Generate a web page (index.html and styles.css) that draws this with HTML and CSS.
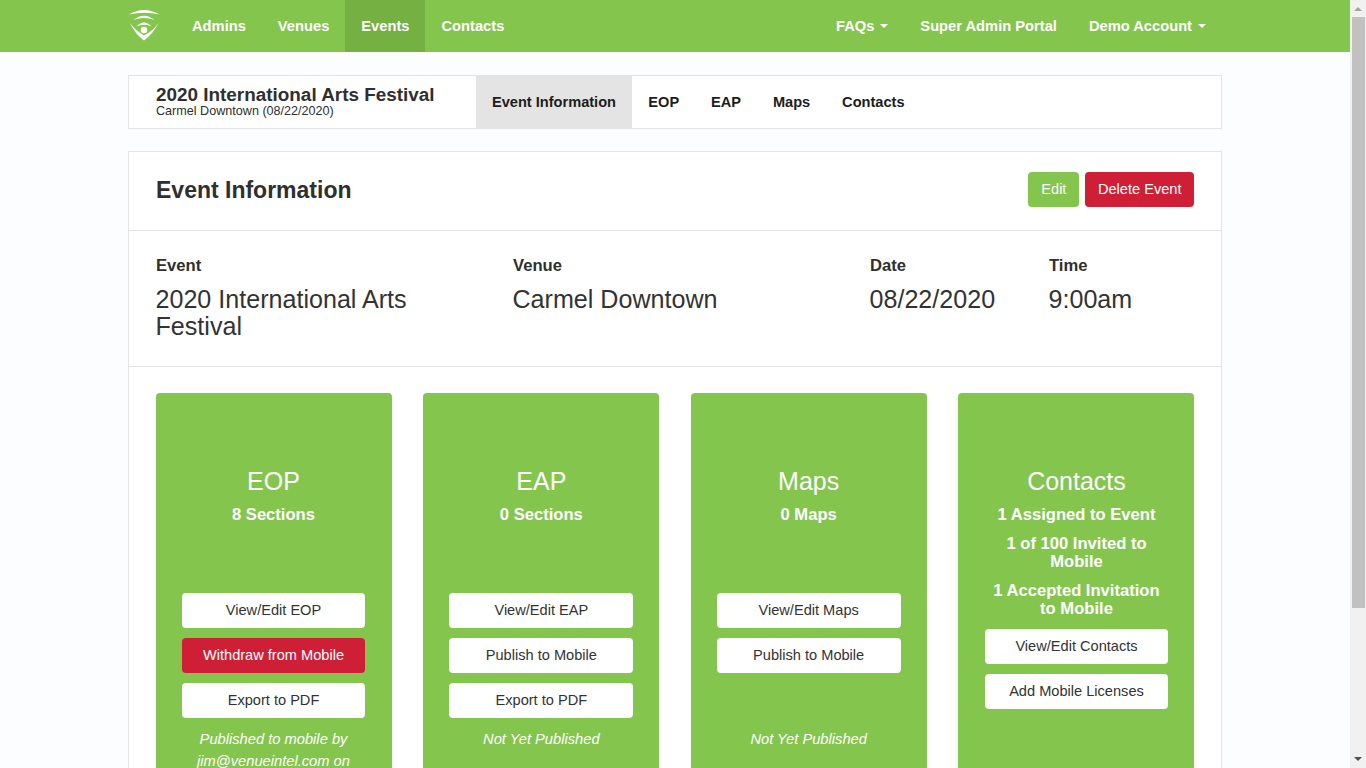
FILE: index.html
```html
<!DOCTYPE html>
<html lang="en">
<head>
<meta charset="utf-8">
<title>2020 International Arts Festival</title>
<link rel="stylesheet" href="styles.css">
</head>
<body>
<nav class="navbar">
  <div class="nav-inner">
    <a class="logo" href="#" aria-label="Venue Intel">
      <svg width="34" height="34" viewBox="0 0 34 34" fill="#fff">
        <path d="M1 5.500Q16 -3.500 31.500 5.500Q16 2 1 5.500Z"/>
        <path d="M5.500 11Q16 2.500 26.500 11Q16 7 5.500 11Z"/>
        <path d="M8.500 17.500Q16 9.500 23.500 17.500Q16 14 8.500 17.500Z"/>
        <path d="M2 14Q7 25 16 31.500Q25 25 30.500 14Q25 22 16 26.500Q8 22 2 14Z"/>
        <circle cx="16" cy="21" r="3.300"/>
      </svg>
    </a>
    <ul class="nav-list">
      <li><a href="#">Admins</a></li>
      <li><a href="#">Venues</a></li>
      <li class="active"><a href="#">Events</a></li>
      <li><a href="#">Contacts</a></li>
    </ul>
    <ul class="nav-list nav-right">
      <li><a href="#">FAQs <span class="caret"></span></a></li>
      <li><a href="#">Super Admin Portal</a></li>
      <li><a href="#">Demo Account <span class="caret"></span></a></li>
    </ul>
  </div>
</nav>
<main class="container">
  <section class="subnav">
    <div class="subnav-title">
      <div class="subnav-name">2020 International Arts Festival</div>
      <div class="subnav-venue">Carmel Downtown (08/22/2020)</div>
    </div>
    <ul class="subnav-list">
      <li class="active"><a href="#">Event Information</a></li>
      <li><a href="#">EOP</a></li>
      <li><a href="#">EAP</a></li>
      <li><a href="#">Maps</a></li>
      <li><a href="#">Contacts</a></li>
    </ul>
  </section>
  <section class="panel">
    <header class="panel-head">
      <h1>Event Information</h1>
      <div class="head-actions">
        <a class="btn btn-green" href="#">Edit</a>
        <a class="btn btn-red" href="#">Delete Event</a>
      </div>
    </header>
    <div class="info">
      <div class="info-col info-event"><h2>Event</h2><p>2020 International Arts Festival</p></div>
      <div class="info-col info-venue"><h2>Venue</h2><p>Carmel Downtown</p></div>
      <div class="info-col info-date"><h2>Date</h2><p>08/22/2020</p></div>
      <div class="info-col info-time"><h2>Time</h2><p>9:00am</p></div>
    </div>
    <div class="cards">
      <article class="card">
        <h3>EOP</h3>
        <div class="stats"><p>8 Sections</p></div>
        <div class="actions">
          <a class="btn btn-white" href="#">View/Edit EOP</a>
          <a class="btn btn-red" href="#">Withdraw from Mobile</a>
          <a class="btn btn-white" href="#">Export to PDF</a>
        </div>
        <p class="note">Published to mobile by jim@venueintel.com on 08/01/2020</p>
      </article>
      <article class="card card-mid">
        <h3>EAP</h3>
        <div class="stats"><p>0 Sections</p></div>
        <div class="actions">
          <a class="btn btn-white" href="#">View/Edit EAP</a>
          <a class="btn btn-white" href="#">Publish to Mobile</a>
          <a class="btn btn-white" href="#">Export to PDF</a>
        </div>
        <p class="note">Not Yet Published</p>
      </article>
      <article class="card card-mid">
        <h3>Maps</h3>
        <div class="stats"><p>0 Maps</p></div>
        <div class="actions">
          <a class="btn btn-white" href="#">View/Edit Maps</a>
          <a class="btn btn-white" href="#">Publish to Mobile</a>
          <span class="btn btn-blank"></span>
        </div>
        <p class="note">Not Yet Published</p>
      </article>
      <article class="card card-last">
        <h3>Contacts</h3>
        <div class="stats stats-contacts">
          <p>1 Assigned to Event</p>
          <p>1 of 100 Invited to Mobile</p>
          <p>1 Accepted Invitation to Mobile</p>
        </div>
        <div class="actions">
          <a class="btn btn-white" href="#">View/Edit Contacts</a>
          <a class="btn btn-white" href="#">Add Mobile Licenses</a>
        </div>
      </article>
    </div>
  </section>
</main>
<div class="scrollbar" aria-hidden="true">
  <span class="arrow arrow-up"></span>
  <span class="thumb"></span>
  <span class="arrow arrow-down"></span>
</div>
</body>
</html>
```
FILE: styles.css
```css
* { box-sizing: border-box; }
html { scrollbar-width: none; }
body {
  margin: 0;
  background: #fcfdff;
  color: #333;
  font-family: "Liberation Sans", Arial, sans-serif;
  font-size: 16px;
  line-height: 1.15;
}
a { text-decoration: none; color: inherit; }
ul { list-style: none; margin: 0; padding: 0; }
h1, h2, h3, p { margin: 0; }

.navbar { background: #84c54e; height: 52px; }
.nav-inner { width: 1094px; margin-left: 128px; display: flex; height: 52px; }
.logo { width: 48px; display: flex; align-items: center; }
.nav-list { display: flex; }
.nav-list a {
  display: flex; align-items: center; height: 52px; padding: 0 16px;
  color: #fff; font-weight: 700; font-size: 14.700px;
}
.nav-list .active a { background: #75b043; }
.nav-right { margin-left: auto; }
.caret {
  display: inline-block; width: 0; height: 0; margin-left: 6px;
  border-top: 4px solid #fff; border-left: 4px solid transparent; border-right: 4px solid transparent;
}

.container { width: 1094px; margin: 23px 0 0 128px; }

.subnav {
  display: flex; height: 54px; background: #fff; border: 1px solid #e4e4e4;
}
.subnav-title { width: 347px; padding: 8.500px 0 0 27px; color: #2f2f2f; }
.subnav-name { font-size: 18.900px; font-weight: 700; line-height: 20px; }
.subnav-venue { font-size: 12.600px; line-height: 13px; margin-top: 0.500px; }
.subnav-list { display: flex; }
.subnav-list a {
  display: flex; align-items: center; height: 52px; padding: 0 15.950px;
  font-size: 14.600px; font-weight: 700; color: #1d1d1d;
}
.subnav-list .active a { background: #e4e4e4; padding-right: 16.400px; }

.panel { background: #fff; border: 1px solid #e4e4e4; margin-top: 22px; }
.panel-head {
  display: flex; justify-content: space-between; align-items: center;
  height: 79px; padding: 0 27px; border-bottom: 1px solid #e4e4e4;
}
.panel-head h1 { font-size: 23px; font-weight: 700; color: #2f2f2f; margin-bottom: 2px; }
.head-actions { display: flex; gap: 6px; margin-bottom: 4px; }

.btn {
  display: flex; align-items: center; justify-content: center;
  height: 35px; padding: 0 12.500px; border-radius: 4px; font-size: 14.600px;
}
.btn-green { background: #84c54e; color: #fff; padding: 0 13px; }
.btn-red { background: #cf1f36; color: #fff; }
.btn-white { background: #fff; color: #333; }
.btn-blank { visibility: hidden; }

.info { display: flex; height: 136px; padding: 26px 27px 0; border-bottom: 1px solid #e4e4e4; }
.info-col h2 { font-size: 16.600px; font-weight: 700; color: #2f2f2f; line-height: 18px; margin-bottom: 11px; }
.info-col p { font-size: 25.100px; line-height: 27px; color: #333; margin-left: -0.500px; }
.info-event { width: 357px; padding-right: 60px; }
.info-venue { width: 357px; }
.info-date { width: 179px; }
.info-time { width: 145px; }

.cards { display: flex; justify-content: space-between; padding: 26px 27px 0; }
.card {
  width: 236px; background: #84c54e; color: #fff; border-radius: 4px 4px 0 0;
  height: 400px; padding: 74px 27px 0 26px; text-align: center;
}
.card-mid { padding-right: 26px; }
.card-last { padding-left: 27px; padding-right: 26px; }
.card h3 { font-size: 25px; font-weight: 400; line-height: 28px; }
.stats { height: 98px; padding-top: 11px; font-size: 16.600px; font-weight: 700; line-height: 18px; }
.stats p { margin-bottom: 11px; }
.stats-contacts { height: 134px; }
.actions { display: flex; flex-direction: column; gap: 10px; }
.note { margin-top: 10px; font-size: 14.700px; font-style: italic; line-height: 22px; }

.scrollbar {
  position: fixed; top: 0; right: 0; bottom: 0; width: 16px;
  display: flex; flex-direction: column; align-items: center;
  background: #f1f1f1; padding: 7px 0;
}
.arrow { width: 0; height: 0; border-left: 4px solid transparent; border-right: 4px solid transparent; }
.arrow-up { border-bottom: 4px solid #a3a3a3; }
.arrow-down { border-top: 4px solid #505050; margin-top: auto; }
.thumb { width: 13px; height: 591px; margin-top: 6px; background: #c1c1c1; margin-left: 1px; }
```
